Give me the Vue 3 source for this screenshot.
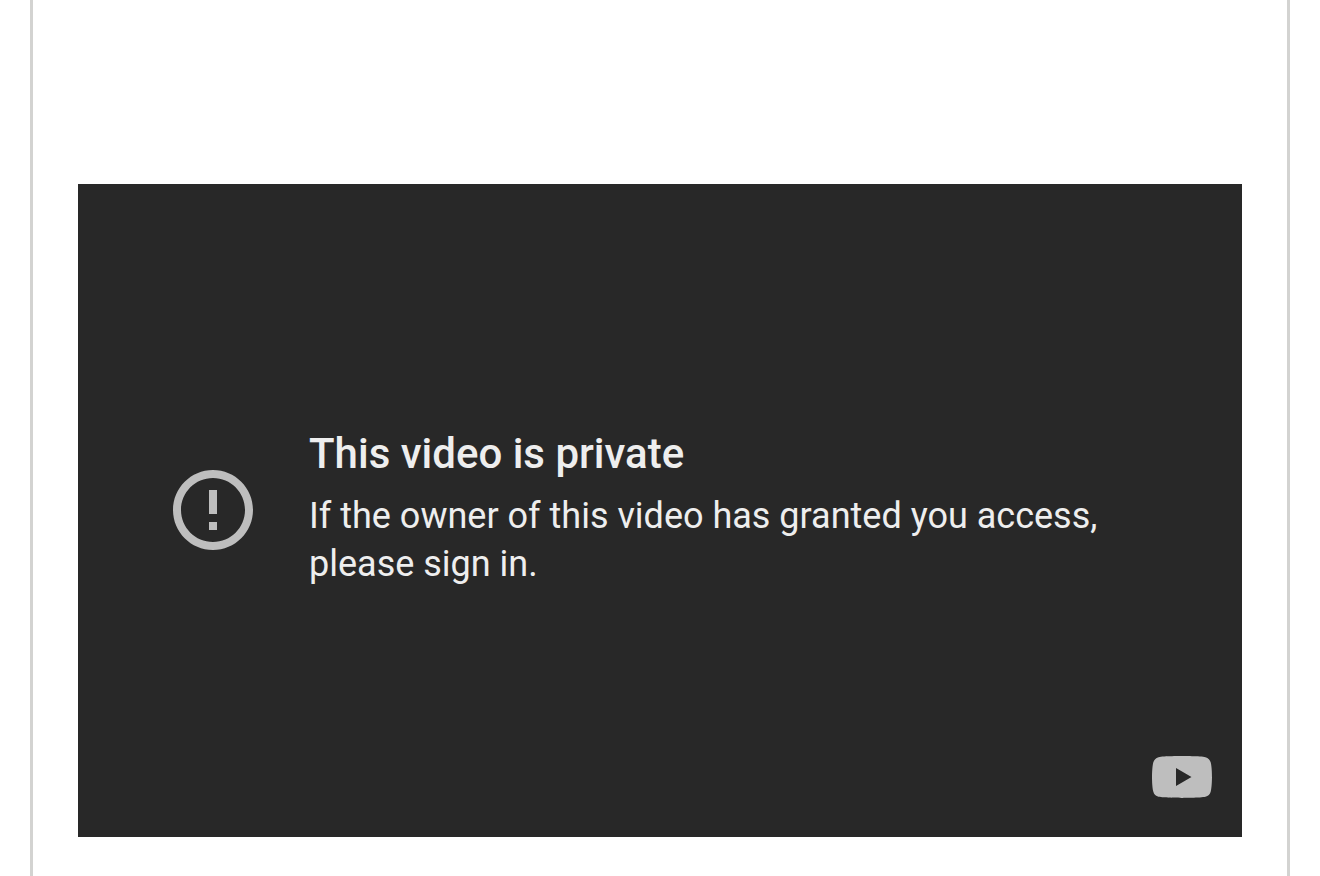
<template>
  <main class="page">
    <section class="player" aria-label="Video player">
      <div class="message">
        <svg class="alert-icon" viewBox="2 2 20 20" aria-hidden="true">
          <path d="M11 15h2v2h-2zm0-8h2v6h-2zm.99-5C6.47 2 2 6.48 2 12s4.47 10 9.99 10C17.52 22 22 17.52 22 12S17.52 2 11.99 2zM12 20c-4.42 0-8-3.58-8-8s3.58-8 8-8 8 3.58 8 8-3.58 8-8 8z" />
        </svg>
        <div class="message-text">
          <h1 class="title">{{ title }}</h1>
          <p class="reason">{{ reason }}</p>
        </div>
      </div>

      <svg class="logo" viewBox="0 3.6 24 16.8" role="img" aria-label="YouTube">
        <path d="M23.498 6.186a3.016 3.016 0 0 0-2.122-2.136C19.505 3.6 12 3.6 12 3.6s-7.505 0-9.377.45A3.017 3.017 0 0 0 .502 6.186C0 8.07 0 12 0 12s0 3.93.502 5.814a3.016 3.016 0 0 0 2.122 2.136C4.495 20.4 12 20.4 12 20.4s7.505 0 9.377-.45a3.015 3.015 0 0 0 2.122-2.136C24 15.93 24 12 24 12s0-3.93-.502-5.814zM9.6 15.6V8.4L15.8 12z" />
      </svg>
    </section>
  </main>
</template>

<script setup>
const title = 'This video is private';
const reason = 'If the owner of this video has granted you access, please sign in.';
</script>

<style>
body {
  margin: 0;
  background: #fff;
}
</style>

<style scoped>
.page {
  box-sizing: border-box;
  min-height: 100vh;
  margin: 0 30px;
  padding: 184px 45px 39px;
  border-right: 3px solid #d3d3d1;
  border-left: 3px solid #d3d3d1;
}

.player {
  position: relative;
  display: flex;
  align-items: center;
  box-sizing: border-box;
  aspect-ratio: 1164 / 653;
  padding: 0 95px 2px;
  background: #282828;
  color: #eee;
  font-family: Roboto, sans-serif;
}

.message {
  display: flex;
  align-items: center;
  gap: 56px;
}

.message-text {
  padding-bottom: 6px;
}

.alert-icon {
  flex: none;
  width: 80px;
  height: 80px;
  fill: #bebebe;
}

.title {
  margin: 0 0 10px;
  font-size: 42px;
  font-weight: 500;
  line-height: 56px;
}

.reason {
  max-width: 840px;
  margin: 0;
  font-size: 36px;
  line-height: 48px;
}

/* logo over the bottom corner of the player */
.logo {
  position: absolute;
  right: 30px;
  bottom: 39px;
  width: 60px;
  height: 42px;
  fill: #bebebe;
}
</style>
